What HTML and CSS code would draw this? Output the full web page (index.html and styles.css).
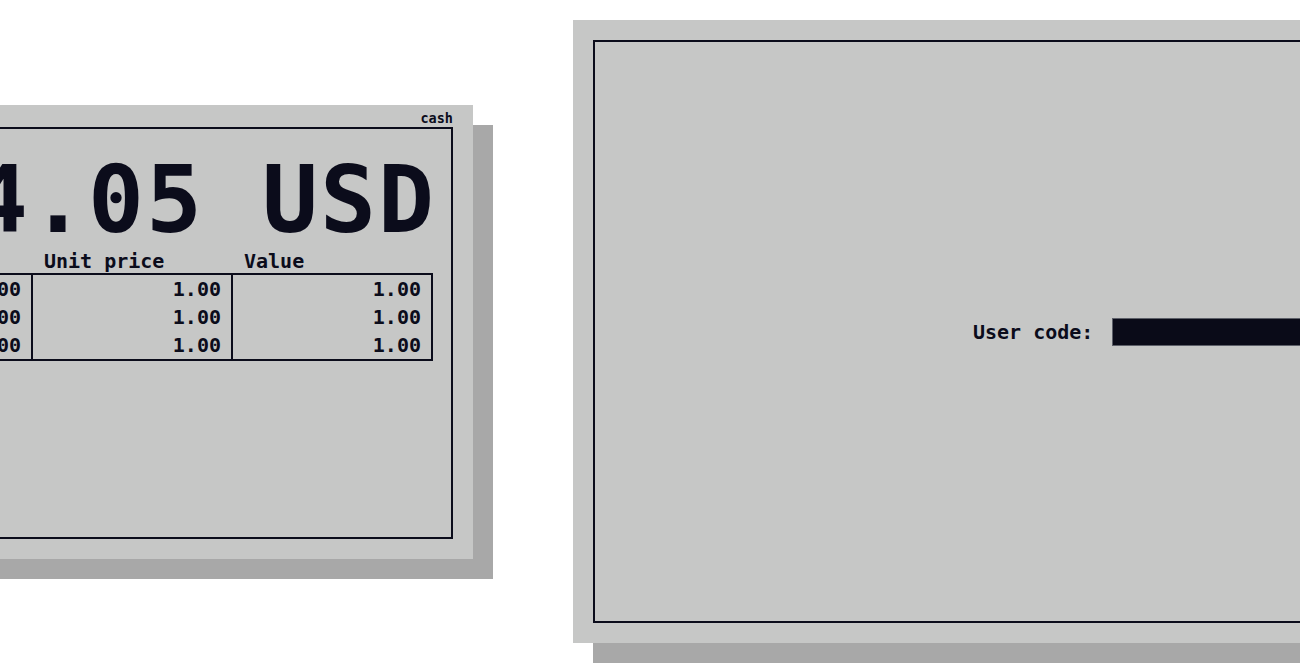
FILE: index.html
```html
<!DOCTYPE html>
<html lang="en">
<head>
<meta charset="utf-8">
<title>POS screens</title>
<link rel="stylesheet" href="styles.css">
</head>
<body>
<div class="stage">
  <section class="screen screen-cash">
    <div class="screen-tag">cash</div>
    <div class="frame frame-cash">
      <div class="total">4.05 USD</div>
      <table class="items">
        <colgroup>
          <col class="col-name">
          <col class="col-num">
          <col class="col-num">
          <col class="col-num">
        </colgroup>
        <thead>
          <tr><th>Item</th><th>Quantity</th><th>Unit price</th><th>Value</th></tr>
        </thead>
        <tbody>
          <tr><td>Item 1</td><td class="num">1.00</td><td class="num">1.00</td><td class="num">1.00</td></tr>
          <tr><td>Item 2</td><td class="num">1.00</td><td class="num">1.00</td><td class="num">1.00</td></tr>
          <tr><td>Item 3</td><td class="num">1.00</td><td class="num">1.00</td><td class="num">1.00</td></tr>
        </tbody>
      </table>
    </div>
  </section>
  <section class="screen screen-login">
    <div class="frame frame-login">
      <div class="login-row">
        <label class="login-label" for="code">User code:</label>
        <div class="code-input" id="code"></div>
      </div>
    </div>
  </section>
</div>
</body>
</html>
```
FILE: styles.css
```css
html, body {
  margin: 0;
  padding: 0;
  background: #ffffff;
  overflow: hidden;
  width: 1300px;
  height: 665px;
}

body {
  font-family: "DejaVu Sans Mono", "Liberation Mono", monospace;
  font-weight: bold;
  color: #0b0c1b;
}

.stage {
  display: flex;
  align-items: flex-start;
  width: max-content;
}

.screen {
  background: #c6c7c6;
  box-shadow: 20px 20px 0 #a8a8a8;
  box-sizing: border-box;
  flex: none;
}

.frame {
  border: 2px solid #0b0c1b;
  box-sizing: border-box;
}

/* cash screen */
.screen-cash {
  width: 900px;
  height: 454px;
  margin-left: -427px;
  margin-top: 105px;
  padding: 0 20px 20px 20px;
  display: flex;
  flex-direction: column;
}

.screen-tag {
  height: 22px;
  box-sizing: border-box;
  padding-top: 4px;
  line-height: 18px;
  font-size: 13.5px;
  text-align: right;
}

.frame-cash {
  flex: 1;
  padding: 24px 18px 0 18px;
}

.total {
  font-size: 93px;
  line-height: 94px;
  letter-spacing: 2px;
  margin-right: -3px;
  text-align: right;
  white-space: nowrap;
}

.items {
  width: 100%;
  border-collapse: collapse;
  font-size: 20px;
}

.col-num {
  width: 200px;
}

.items th {
  text-align: left;
  font-weight: bold;
  line-height: 22px;
  padding: 3px 10px 1px 12px;
}

.items td {
  line-height: 28px;
  padding: 0 10px;
  border-left: 2px solid #0b0c1b;
  border-right: 2px solid #0b0c1b;
  white-space: nowrap;
}

.items tbody tr:first-child td {
  border-top: 2px solid #0b0c1b;
}

.items tbody tr:last-child td {
  border-bottom: 2px solid #0b0c1b;
}

.items td.num {
  text-align: right;
}

/* login screen */
.screen-login {
  width: 1000px;
  height: 623px;
  margin-left: 100px;
  margin-top: 20px;
  padding: 20px;
  display: flex;
}

.frame-login {
  flex: 1;
  display: flex;
  align-items: center;
  padding-left: 378px;
}

.login-row {
  display: flex;
  align-items: center;
  gap: 19px;
}

.login-label {
  font-size: 20px;
  line-height: 24px;
  white-space: nowrap;
}

.code-input {
  width: 300px;
  height: 28px;
  box-sizing: border-box;
  background: #0a0b18;
  border: 1px solid #5c5f68;
}
```
